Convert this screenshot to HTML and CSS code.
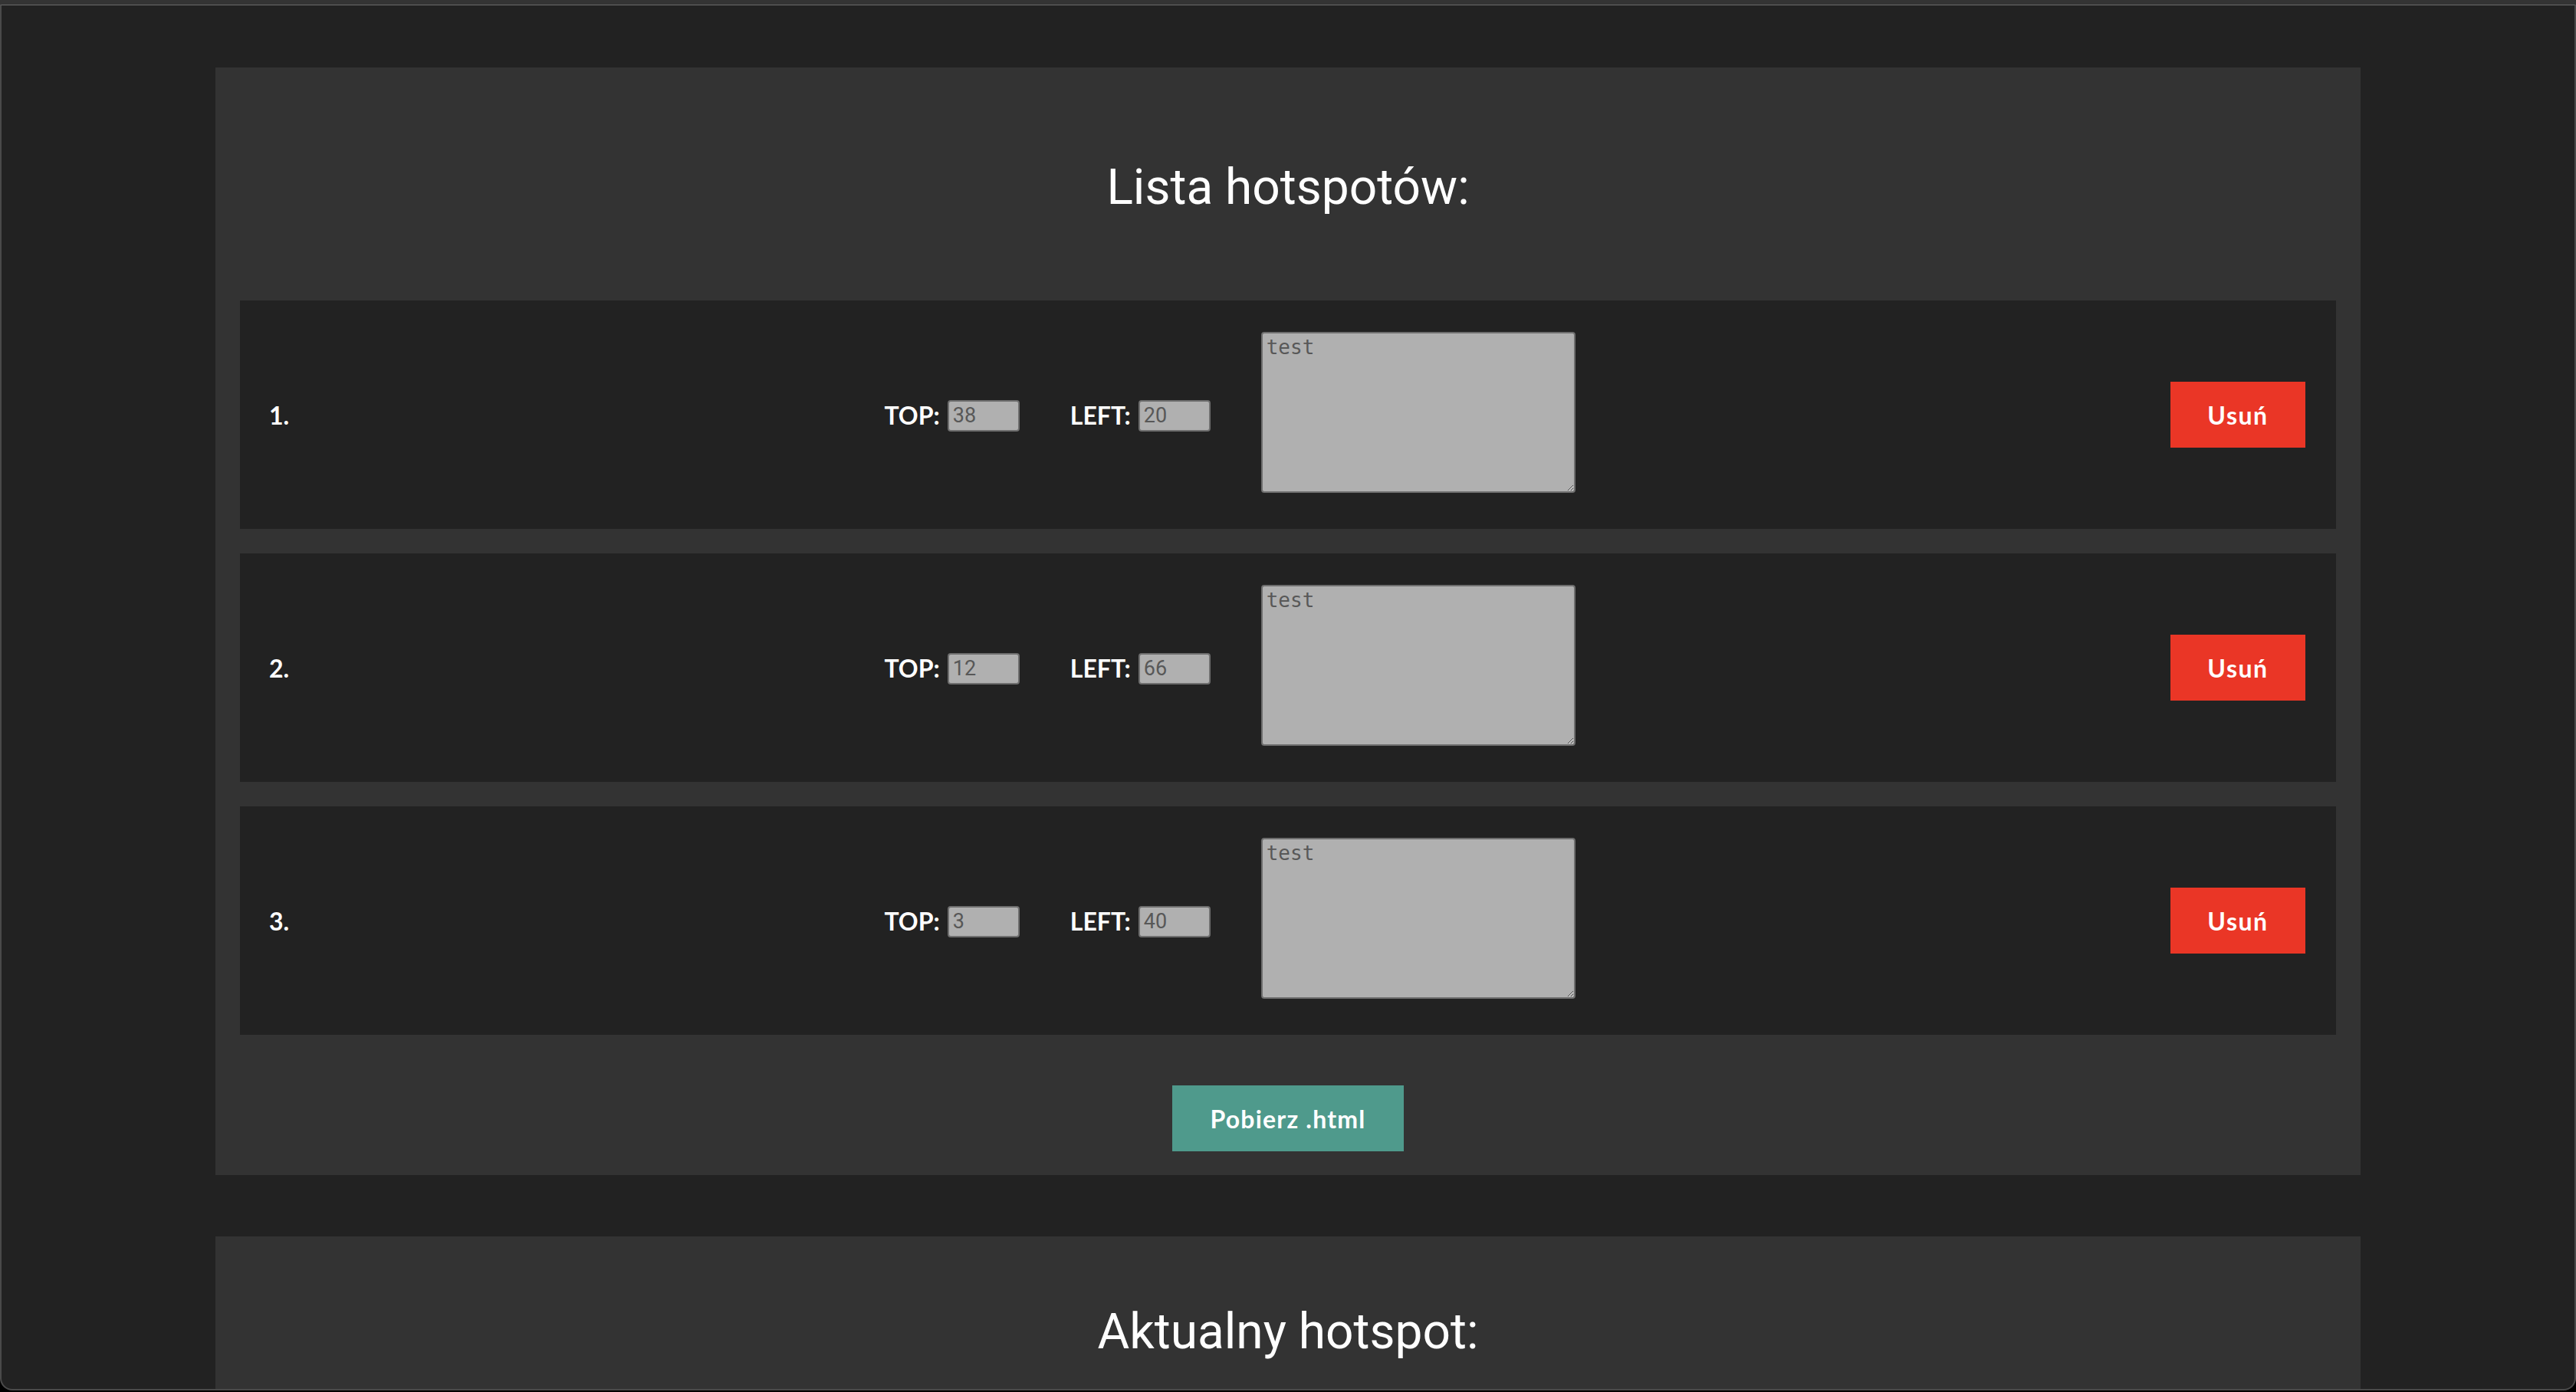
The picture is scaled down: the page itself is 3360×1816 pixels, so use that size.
FILE: index.html
```html
<!DOCTYPE html>
<html lang="pl">
<head>
<meta charset="utf-8">
<title>Hotspoty</title>
<link rel="stylesheet" href="styles.css">
</head>
<body>
<div class="window">
  <section class="card card--list">
    <h2 class="card-title">Lista hotspotów:</h2>
    <div class="rows">
      <div class="row">
        <span class="num">1.</span>
        <div class="fields">
          <label class="field">TOP: <input class="num-input" type="text" placeholder="38"></label>
          <label class="field field--left">LEFT: <input class="num-input" type="text" placeholder="20"></label>
          <textarea class="desc" placeholder="test"></textarea>
        </div>
        <button class="btn btn--delete">Usuń</button>
      </div>
      <div class="row">
        <span class="num">2.</span>
        <div class="fields">
          <label class="field">TOP: <input class="num-input" type="text" placeholder="12"></label>
          <label class="field field--left">LEFT: <input class="num-input" type="text" placeholder="66"></label>
          <textarea class="desc" placeholder="test"></textarea>
        </div>
        <button class="btn btn--delete">Usuń</button>
      </div>
      <div class="row">
        <span class="num">3.</span>
        <div class="fields">
          <label class="field">TOP: <input class="num-input" type="text" placeholder="3"></label>
          <label class="field field--left">LEFT: <input class="num-input" type="text" placeholder="40"></label>
          <textarea class="desc" placeholder="test"></textarea>
        </div>
        <button class="btn btn--delete">Usuń</button>
      </div>
    </div>
    <div class="actions">
      <button class="btn btn--download">Pobierz .html</button>
    </div>
  </section>
  <section class="card card--current">
    <h2 class="card-title">Aktualny hotspot:</h2>
  </section>
</div>
</body>
</html>
```

FILE: styles.css
```css
html, body {
  margin: 0;
  padding: 0;
  height: 100%;
  overflow: hidden;
  background: #000;
}

body {
  font-family: Lato, "Open Sans", "Liberation Sans", sans-serif;
  color: #fff;
  background: linear-gradient(#343434 0, #343434 6px, #000 6px);
}

.window {
  box-sizing: border-box;
  margin-top: 6px;
  height: 1808px;
  background: #222;
  border-top: 1px solid #6a6a6a;
  border-left: 2px solid #4a4a4a;
  border-right: 2px solid #4a4a4a;
  border-bottom: 2px solid #4a4a4a;
  border-radius: 0 0 16px 16px;
  overflow: hidden;
  display: flex;
  flex-direction: column;
  align-items: center;
}

.card {
  box-sizing: border-box;
  width: 2798px;
  background: #333;
  padding: 0 32px 31px;
  flex-shrink: 0;
}

.card--list {
  margin-top: 81px;
}

.card--current {
  margin-top: 80px;
  min-height: 600px;
}

.card-title {
  font-family: Roboto, "Liberation Sans", sans-serif;
  font-weight: 400;
  font-size: 64px;
  line-height: 77px;
  text-align: center;
  margin: 0;
  color: #fff;
}

.card--list .card-title {
  padding-top: 118px;
  margin-bottom: 109px;
}

.card--current .card-title {
  padding-top: 86px;
}

.rows {
  display: flex;
  flex-direction: column;
  gap: 32px;
}

.row {
  height: 298px;
  background: #222;
  display: flex;
  align-items: center;
  justify-content: space-between;
  padding: 0 40px 0 38px;
}

.num {
  font-weight: 700;
  font-size: 32px;
}

.fields {
  display: flex;
  align-items: center;
}

.field {
  display: flex;
  align-items: center;
  gap: 10px;
  font-weight: 700;
  font-size: 32px;
}

.field--left {
  margin-left: 66px;
}

.num-input {
  box-sizing: border-box;
  width: 94px;
  height: 41px;
  margin: 2px 0 0;
  background: #b0b0b0;
  border: 2px solid #6e6e6e;
  border-radius: 4px;
  padding: 0 5px;
  font-family: Roboto, "Liberation Sans", sans-serif;
  font-size: 27px;
  color: #555;
  outline: none;
}

.num-input::placeholder {
  color: #585858;
}

.desc {
  box-sizing: border-box;
  width: 410px;
  height: 210px;
  margin: 0 0 6px 66px;
  background: #b0b0b0;
  border: 2px solid #6e6e6e;
  border-radius: 4px;
  padding: 3px 5px;
  font-family: "DejaVu Sans Mono", "Liberation Mono", monospace;
  font-size: 26px;
  color: #555;
  outline: none;
  resize: both;
}

.desc::placeholder {
  color: #585858;
}

.btn {
  border: none;
  color: #fff;
  font-family: Lato, "Open Sans", "Liberation Sans", sans-serif;
  font-weight: 700;
  font-size: 32px;
  height: 86px;
  cursor: pointer;
  padding: 0;
}

.btn--delete {
  width: 176px;
  background: #ea3626;
  letter-spacing: 1.5px;
}

.actions {
  display: flex;
  justify-content: center;
  margin-top: 66px;
}

.btn--download {
  width: 302px;
  background: #4f9a8c;
  letter-spacing: 1.2px;
}
```
